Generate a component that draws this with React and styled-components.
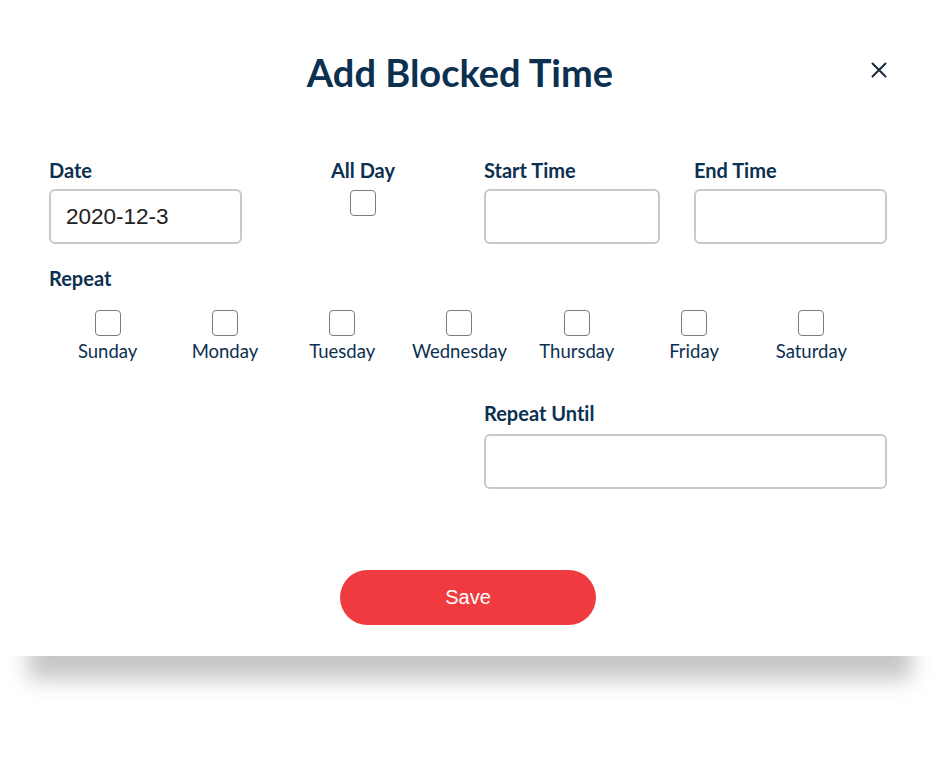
import React from "react";
import styled, { createGlobalStyle } from "styled-components";

const Global = createGlobalStyle`
  html, body { margin: 0; padding: 0; background: #ffffff; }
  body { font-family: "Lato", "Liberation Sans", sans-serif; font-variant-ligatures: none; }
  * { box-sizing: border-box; }
`;

const NAVY = "#0c3050";

const Page = styled.div`
  width: 940px;
  height: 778px;
  background: #fff;
  overflow: hidden;
`;

const Modal = styled.div`
  width: 940px;
  height: 656px;
  background: #fff;
  border-radius: 12px;
  box-shadow: 0 52px 20px -28px rgba(0, 0, 0, 0.22);
  padding: 44px 53px 0 49px;
  display: flex;
  flex-direction: column;
  position: relative;
  z-index: 1;
`;

const Header = styled.div`
  display: grid;
  grid-template-columns: 1fr auto 1fr;
  align-items: center;
  margin-left: -16px;
`;

const Title = styled.h1`
  grid-column: 2;
  margin: 0;
  font-family: "Lato", sans-serif;
  font-weight: 700;
  font-size: 38px;
  line-height: 56px;
  color: ${NAVY};
  letter-spacing: 0;
`;

const Close = styled.button`
  grid-column: 3;
  justify-self: end;
  margin-right: -2px;
  margin-top: -4px;
  width: 20px;
  height: 20px;
  padding: 0;
  border: none;
  background: none;
  display: flex;
  align-items: center;
  justify-content: center;
  cursor: pointer;
`;

const TopGrid = styled.div`
  display: grid;
  grid-template-columns: 193px 1fr 176px 193px;
  column-gap: 34px;
  margin-top: 58px;
`;

const Field = styled.div`
  display: flex;
  flex-direction: column;
  align-items: ${(p) => (p.$center ? "center" : "stretch")};
`;

const Label = styled.label`
  font-family: "Lato", sans-serif;
  font-weight: 700;
  font-size: 20px;
  line-height: 24px;
  color: ${NAVY};
  font-variant-ligatures: none;
  margin-bottom: ${(p) => p.$gap || "7px"};
`;

const Input = styled.div`
  height: 55px;
  border: 2px solid #c9c9c9;
  border-radius: 6px;
  padding: 0 15px;
  display: flex;
  align-items: center;
  font-family: "Liberation Sans", Arial, sans-serif;
  font-size: 22.5px;
  color: #222;
`;

const Box = styled.span`
  display: block;
  width: 26px;
  height: 26px;
  border: 1.5px solid #7c7c7c;
  border-radius: 4px;
  background: #fff;
`;

const RepeatLabel = styled(Label)`
  margin-top: 22px;
  margin-bottom: 0;
`;

const Days = styled.div`
  display: grid;
  grid-template-columns: repeat(7, 1fr);
  width: 821px;
  margin-top: 20px;
`;

const Day = styled.div`
  display: flex;
  flex-direction: column;
  align-items: center;
  gap: 3px;
`;

const DayName = styled.span`
  font-family: "Lato", sans-serif;
  font-weight: 400;
  font-size: 18.5px;
  line-height: 24px;
  color: ${NAVY};
`;

const UntilRow = styled.div`
  display: flex;
  justify-content: flex-end;
  margin-top: 38px;
`;

const UntilField = styled(Field)`
  width: 403px;
`;

const Actions = styled.div`
  display: flex;
  justify-content: center;
  margin-top: 81px;
`;

const SaveButton = styled.button`
  width: 256px;
  height: 55px;
  border: none;
  border-radius: 28px;
  background: #ef3b3f;
  color: #fff;
  font-family: "Liberation Sans", Arial, sans-serif;
  font-size: 20px;
  cursor: pointer;
`;

const days = ["Sunday", "Monday", "Tuesday", "Wednesday", "Thursday", "Friday", "Saturday"];

export default function App() {
  return (
    <Page>
      <Global />
      <Modal>
        <Header>
          <Title>Add Blocked Time</Title>
          <Close aria-label="Close">
            <svg width="16" height="16" viewBox="0 0 16 16">
              <path d="M1.5 1.5 L14.5 14.5 M14.5 1.5 L1.5 14.5" stroke="#1d2a3a" strokeWidth="2" strokeLinecap="round" />
            </svg>
          </Close>
        </Header>

        <TopGrid>
          <Field>
            <Label>Date</Label>
            <Input>2020-12-3</Input>
          </Field>
          <Field $center>
            <Label $gap="8px">All Day</Label>
            <Box />
          </Field>
          <Field>
            <Label>Start Time</Label>
            <Input />
          </Field>
          <Field>
            <Label>End Time</Label>
            <Input />
          </Field>
        </TopGrid>

        <RepeatLabel>Repeat</RepeatLabel>
        <Days>
          {days.map((d) => (
            <Day key={d}>
              <Box />
              <DayName>{d}</DayName>
            </Day>
          ))}
        </Days>

        <UntilRow>
          <UntilField>
            <Label $gap="9px">Repeat Until</Label>
            <Input />
          </UntilField>
        </UntilRow>

        <Actions>
          <SaveButton>Save</SaveButton>
        </Actions>
      </Modal>
    </Page>
  );
}
